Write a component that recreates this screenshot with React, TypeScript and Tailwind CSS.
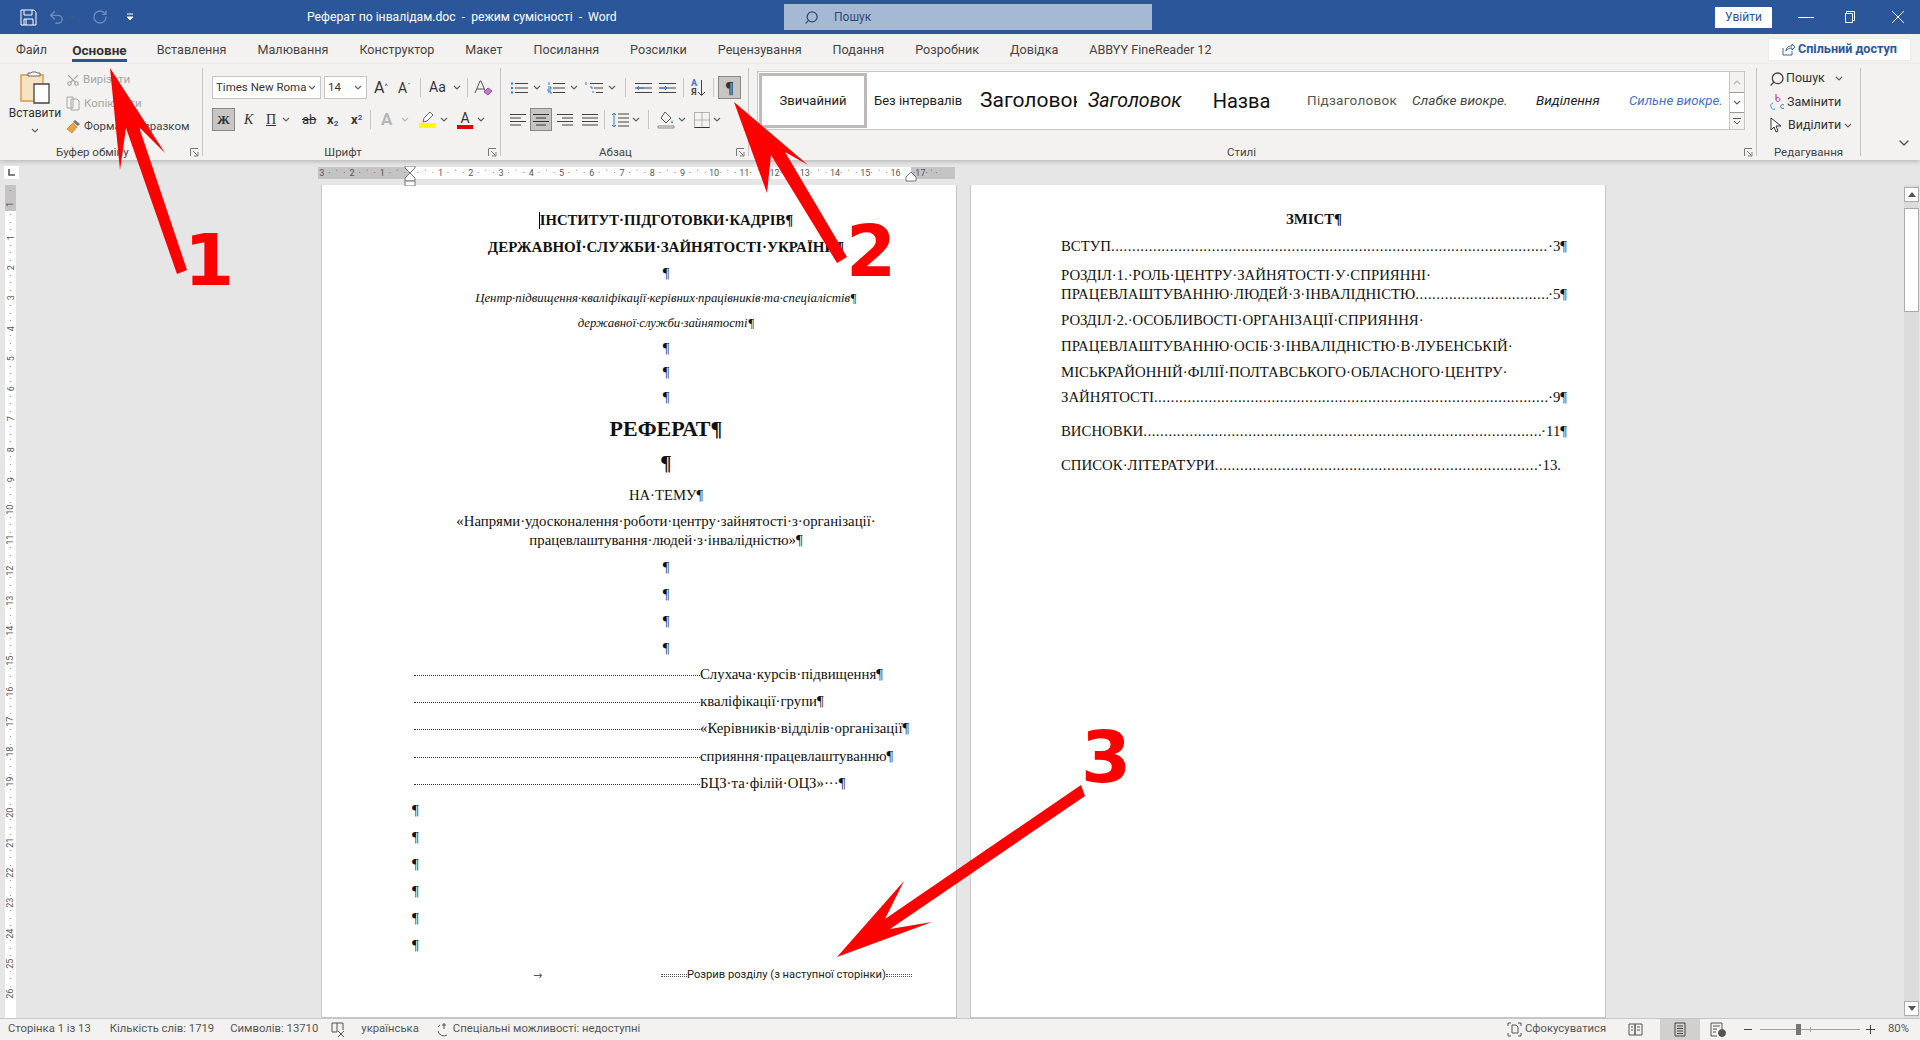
import { ChevronDown, RotateCw, Scissors, Search, Undo2 } from "lucide-react"
import type { ReactNode } from "react"

const tabs = ["Вставлення", "Малювання", "Конструктор", "Макет", "Посилання", "Розсилки", "Рецензування", "Подання", "Розробник", "Довідка", "ABBYY FineReader 12"]

function Chev({ className = "" }: { className?: string }) {
    return <svg width="8" height="5" viewBox="0 0 8 5" className={className}><path d="M1 1l3 3 3-3" fill="none" stroke="#605e5c" strokeWidth="1.1" /></svg>
}

function Launcher() {
    return <svg width="9" height="9" viewBox="0 0 9 9" className="shrink-0"><path d="M.5 8V.5H8M3 3l4.5 4.5M4 8h4V4" fill="none" stroke="#7a7a7a" /></svg>
}

function Sep({ className = "" }: { className?: string }) {
    return <div className={`w-px bg-[#c8c6c4] shrink-0 ${className}`} />
}

function GroupLabel({ children, pad }: { children: ReactNode, pad: string }) {
    return <div className={`h-[16px] pt-[2px] flex items-center text-[11.5px] text-[#444] ${pad}`}>{children}</div>
}

function Lines({ x = 3, n = 3, w = 14, gap = 4, color = "#444" }: { x?: number, n?: number, w?: number, gap?: number, color?: string }) {
    const rows = Array.from({ length: n }, (_, i) => i)
    return <>{rows.map(i => <path key={i} d={`M${x} ${2.5 + i * gap}h${w}`} stroke={color} />)}</>
}

function RulerCell({ label, first }: { label: string, first: boolean }) {
    const num = <span className="w-[7.56px] text-center">{label}</span>
    return <div className="flex w-[30.25px] shrink-0 items-center">
        {first && num}
        <span className="w-[7.56px] text-center">·</span>
        <span className="w-[7.56px] text-center">ˈ</span>
        <span className="w-[7.56px] text-center">·</span>
        {!first && num}
    </div>
}

function Line({ className, children }: { className: string, children: ReactNode }) {
    return <div className={`flex items-center whitespace-nowrap ${className}`}>{children}</div>
}

function Tabbed({ children, className = "" }: { children: ReactNode, className?: string }) {
    return <div className={`flex items-center h-[27px] text-[14.8px] whitespace-nowrap ${className}`}>
        <div className="w-[286px] border-b border-dotted border-[#333] mt-[1px]" />
        <span>{children}</span>
    </div>
}

function TocRow({ title, end, className }: { title: string, end: string, className: string }) {
    return <div className={`flex items-center whitespace-nowrap ${className}`}>
        <span>{title}</span>
        <span className="flex-1 overflow-hidden tracking-[0.5px]">{".".repeat(120)}</span>
        <span>{end}</span>
    </div>
}

function Arrows() {
    return <svg width="1920" height="1040" viewBox="0 0 1920 1040" className="absolute inset-0 pointer-events-none z-20">
        <polygon fill="#ff0000" points="110,68 165,153 139,127 187,270 177,274 126,128 120,170" />
        <polygon fill="#ff0000" points="734,102 808,165 785,152 847,257 837,263 771,155 767,193" />
        <polygon fill="#ff0000" points="837,957 904,881 885,919 1081,785 1085,796 890,929 932,922" />
    </svg>
}

export default function App() {
    return <div className="relative w-[1920px] h-[1040px] overflow-hidden flex flex-col bg-[#e6e6e6] font-['Roboto',sans-serif] text-[#333]">
        {/* title bar */}
        <div className="h-[34px] shrink-0 bg-[#2b579a] flex items-center text-white">
            <div className="w-[307px] flex items-center pl-[20px] shrink-0">
                <svg width="17" height="17" viewBox="0 0 17 17" fill="none" stroke="#fff"><path d="M1 1h13l2 2v13H1zM4 1v5h8V1M4 16v-6h9v6M6 10v6" /></svg>
                <Undo2 size={17} className="ml-[11px] text-[#6c8bbb]" />
                <Chev className="ml-[2px] opacity-40" />
                <RotateCw size={16} className="ml-[17px] text-[#6c8bbb]" />
                <svg width="8" height="8" viewBox="0 0 8 8" className="ml-[18px]"><path d="M1 1h6M1 4h6L4 7z" stroke="#fff" fill="#fff" /></svg>
            </div>
            <div className="w-[477px] shrink-0 text-[12.2px] whitespace-pre">Реферат по інвалідам.doc  -  режим сумісності  -  Word</div>
            <div className="w-[368px] h-[26px] shrink-0 bg-[#a5b9d4] flex items-center text-[#2f4a75] text-[12px] pl-[20px]">
                <Search size={15} className="-scale-x-100 mr-[15px]" />
                Пошук
            </div>
            <div className="ml-auto w-[57px] h-[21px] mr-[25px] bg-white text-[#2b579a] text-[12px] flex items-center justify-center">Увійти</div>
            <div className="w-[16px] h-px bg-white mr-[30px] ml-[1px]" />
            <svg width="12" height="12" viewBox="0 0 12 12" fill="none" stroke="#fff" className="mr-[35px]"><path d="M2.5 2.5V.5h8v9h-2M1.5 2.5h7v9h-7z" /></svg>
            <svg width="14" height="14" viewBox="0 0 14 14" stroke="#fff" className="mr-[15px]"><path d="M1 1l12 12M13 1L1 13" /></svg>
        </div>

        {/* tabs */}
        <div className="h-[30px] shrink-0 bg-[#f3f2f1] flex items-center pl-[16px] text-[12.6px] text-[#444] gap-[31px]">
            <span className="mt-[2px] -mr-[6px]">Файл</span>
            <span className="mt-[2px] -mr-[1px] relative font-bold text-[13.6px] text-[#333]">Основне
                <span className="absolute left-0 right-0 top-[19px] h-[3px] bg-[#2b579a]" />
            </span>
            {tabs.map(t => <span key={t} className="mt-[2px]">{t}</span>)}
            <div className="ml-auto mr-[9px] w-[143px] h-[23px] mt-[1px] bg-white border border-[#edebe9] flex items-center justify-center font-bold text-[#2b579a] gap-[3px]">
                <svg width="13" height="13" viewBox="0 0 13 13" fill="none" stroke="#2b579a"><path d="M1 5v7h9V8M4 8c0-3 2-5 6-5V1l3 3-3 3V5C7 5 5 6 4 8z" strokeWidth=".9" /></svg>
                Спільний доступ
            </div>
        </div>

        {/* ribbon */}
        <div className="h-[96px] shrink-0 bg-[#f3f2f1] flex shadow-[0_2px_4px_rgba(0,0,0,0.18)] z-10 relative text-[11.5px]">
            <div className="w-[202px] shrink-0 flex flex-col">
                <div className="flex-1 flex">
                    <div className="w-[64px] flex flex-col items-center pt-[7px] pl-[6px]">
                        <svg width="32" height="34" viewBox="0 0 32 34" fill="none">
                            <path d="M6 4h18v11H16v15H2V4z" fill="#f6e3c4" stroke="#d9973c" strokeWidth="1.4" />
                            <path d="M9 5V2h3l1-1h4l1 1h3v3z" fill="#fff" stroke="#666" />
                            <path d="M15 13h15v19H15z" fill="#fff" stroke="#444" strokeWidth="1.3" />
                        </svg>
                        <span className="text-[12px] leading-[15px] mt-[1px]">Вставити</span>
                        <Chev className="mt-[7px]" />
                    </div>
                    <div className="flex flex-col pt-[4px] text-[#a6a6a6] pl-[2px]">
                        <div className="h-[24px] flex items-center gap-[3px]"><Scissors size={14} className="-rotate-90" />Вирізати</div>
                        <div className="h-[23px] flex items-center gap-[3px]">
                            <svg width="15" height="15" viewBox="0 0 15 15" fill="none" stroke="#a6a6a6"><path d="M1 1h6v11H1zM5 3h6l2 2v9H5z" fill="#f3f2f1" /></svg>
                            Копіювати
                        </div>
                        <div className="h-[23px] flex items-center gap-[3px] text-[#444]">
                            <svg width="15" height="15" viewBox="0 0 15 15"><path d="M9 1l5 4-2 2-5-4z" fill="#777" /><path d="M7 4l4 4-5 6-5-4z" fill="#e8a33d" stroke="#b5742a" strokeWidth=".6" /></svg>
                            Формат за зразком
                        </div>
                    </div>
                </div>
                <div className="flex items-center pl-[56px] pr-[3px]">
                    <GroupLabel pad="flex-1 pb-0">Буфер обміну</GroupLabel>
                    <Launcher />
                </div>
            </div>
            <Sep className="h-[88px] mt-[4px]" />

            <div className="w-[297px] shrink-0 flex flex-col">
                <div className="flex-1 pl-[9px] pt-[12px]">
                    <div className="flex items-center h-[23px]">
                        <div className="w-[109px] h-[23px] bg-white border border-[#c8c6c4] flex items-center justify-between pl-[3px] pr-[4px] overflow-hidden whitespace-nowrap">
                            <span className="w-[92px] overflow-hidden">Times New Roma</span><Chev />
                        </div>
                        <div className="ml-[3px] w-[43px] h-[23px] bg-white border border-[#c8c6c4] flex items-center justify-between pl-[3px] pr-[4px]">14<Chev /></div>
                        <span className="ml-[7px] text-[16px] leading-none w-[24px]">A<sup className="text-[8px] text-[#2b579a]">^</sup></span>
                        <span className="text-[14px] leading-none w-[22px]">A<sup className="text-[8px] text-[#2b579a]">ˇ</sup></span>
                        <Sep className="h-[19px] mr-[8px]" />
                        <span className="text-[14px] w-[24px]">Aa</span><Chev />
                        <Sep className="h-[19px] mx-[6px]" />
                        <svg width="20" height="18" viewBox="0 0 20 18" fill="none"><path d="M1 14L6 2h1l5 12M3 10h7" stroke="#555" /><path d="M10 13l4-4 4 3-4 4z" fill="#c77bd0" stroke="#a0489e" /></svg>
                    </div>
                    <div className="flex items-center h-[23px] mt-[9px]">
                        <div className="w-[23px] h-[23px] bg-[#c8c6c4] border border-[#8a8886] flex items-center justify-center font-bold text-[13px] font-['Liberation_Serif',serif]">Ж</div>
                        <span className="ml-[9px] w-[22px] italic text-[14px] font-['Liberation_Serif',serif]">К</span>
                        <span className="w-[16px] underline text-[14px] font-['Liberation_Serif',serif]">П</span>
                        <Chev />
                        <span className="ml-[12px] w-[25px] line-through text-[13px]">ab</span>
                        <span className="w-[24px] font-bold text-[13px]">x<sub className="text-[8px] text-[#2b579a]">2</sub></span>
                        <span className="w-[19px] font-bold text-[13px]">x<sup className="text-[8px] text-[#2b579a]">2</sup></span>
                        <Sep className="h-[19px] mr-[10px]" />
                        <span className="w-[20px] text-[17px] font-bold text-[#b5b5b5]">A</span><Chev className="opacity-40" />
                        <div className="ml-[10px] w-[17px] flex flex-col items-center">
                            <svg width="14" height="12" viewBox="0 0 14 12"><path d="M2 11l1-4 6-6 3 3-6 6z" fill="#fff" stroke="#666" /></svg>
                            <div className="w-[17px] h-[5px] bg-[#ffff00]" />
                        </div>
                        <Chev className="ml-[4px]" />
                        <div className="ml-[9px] w-[16px] flex flex-col items-center leading-[14px]">
                            <span className="text-[14px]">A</span>
                            <div className="w-[16px] h-[4px] bg-[#e00000]" />
                        </div>
                        <Chev className="ml-[4px]" />
                    </div>
                </div>
                <div className="flex items-center pr-[3px]">
                    <GroupLabel pad="flex-1 justify-center pr-[5px]">Шрифт</GroupLabel>
                    <Launcher />
                </div>
            </div>
            <Sep className="h-[88px] mt-[4px]" />

            <div className="w-[247px] shrink-0 flex flex-col">
                <div className="flex-1 pl-[9px] pt-[12px]">
                    <div className="flex items-center h-[23px]">
                        <svg width="18" height="14" viewBox="0 0 18 14" fill="none"><Lines x={5} w={13} gap={4.5} /><path d="M1 2.5h2M1 7h2M1 11.5h2" stroke="#2b7cd3" strokeWidth="2" /></svg>
                        <Chev className="ml-[5px]" />
                        <svg width="18" height="14" viewBox="0 0 18 14" fill="none" className="ml-[6px]"><Lines x={6} w={12} gap={4.5} /><path d="M2 1v3M1 6h3v2H1v2h3M1 11h3v2" stroke="#2b7cd3" /></svg>
                        <Chev className="ml-[5px]" />
                        <svg width="20" height="14" viewBox="0 0 20 14" fill="none" className="ml-[6px]"><path d="M6 2.5h13M10 7h9M12 11.5h7" stroke="#444" /><path d="M2 1v3M6 6h2v2M8 11h2" stroke="#2b7cd3" /></svg>
                        <Chev className="ml-[4px]" />
                        <Sep className="h-[19px] mx-[9px]" />
                        <svg width="17" height="14" viewBox="0 0 17 14" fill="none"><Lines x={0} w={17} gap={4.5} /><path d="M9 7H2m2-2L2 7l2 2" stroke="#2b7cd3" /></svg>
                        <svg width="17" height="14" viewBox="0 0 17 14" fill="none" className="ml-[7px]"><Lines x={0} w={17} gap={4.5} /><path d="M1 7h7M6 5l2 2-2 2" stroke="#2b7cd3" /></svg>
                        <Sep className="h-[19px] mx-[7px]" />
                        <div className="w-[18px] flex items-center leading-[9px] text-[9px]">
                            <div className="flex flex-col items-center font-bold text-[#2b7cd3]"><span>А</span><span className="text-[#444]">Я</span></div>
                            <svg width="9" height="18" viewBox="0 0 9 18" fill="none" stroke="#444"><path d="M4.5 1v15M1 13l3.5 3.5L8 13" /></svg>
                        </div>
                        <Sep className="h-[19px] mx-[4px]" />
                        <div className="w-[23px] h-[23px] bg-[#c8c6c4] border border-[#8a8886] flex items-center justify-center font-bold text-[16px] font-['Liberation_Serif',serif]">¶</div>
                    </div>
                    <div className="flex items-center h-[23px] mt-[9px]">
                        <svg width="17" height="14" viewBox="0 0 17 14" fill="none"><path d="M0 1.5h16M0 5h11M0 8.5h16M0 12h11" stroke="#444" /></svg>
                        <div className="ml-[3px] w-[22px] h-[23px] bg-[#c8c6c4] border border-[#8a8886] flex items-center justify-center">
                            <svg width="16" height="14" viewBox="0 0 16 14" fill="none"><path d="M0 1.5h16M3 5h10M0 8.5h16M3 12h10" stroke="#333" /></svg>
                        </div>
                        <svg width="17" height="14" viewBox="0 0 17 14" fill="none" className="ml-[5px]"><path d="M0 1.5h16M5 5h11M0 8.5h16M5 12h11" stroke="#444" /></svg>
                        <svg width="16" height="14" viewBox="0 0 16 14" fill="none" className="ml-[8px]"><path d="M0 1.5h16M0 5h16M0 8.5h16M0 12h16" stroke="#444" /></svg>
                        <Sep className="h-[19px] mx-[6px]" />
                        <svg width="18" height="16" viewBox="0 0 18 16" fill="none"><path d="M7 2h11M7 6h11M7 10h11M7 14h11" stroke="#444" /><path d="M3 1v14M1 3l2-2 2 2M1 13l2 2 2-2" stroke="#2b7cd3" /></svg>
                        <Chev className="ml-[3px]" />
                        <Sep className="h-[19px] mx-[8px]" />
                        <svg width="18" height="18" viewBox="0 0 18 18" fill="none"><path d="M8 1l6 6-5 5-5-5z" stroke="#555" /><path d="M15 9l1 3h-2z" fill="#2b7cd3" /><path d="M1 15h16v2H1z" fill="#f3f2f1" stroke="#888" /></svg>
                        <Chev className="ml-[3px]" />
                        <svg width="16" height="16" viewBox="0 0 16 16" fill="none" className="ml-[8px]"><path d="M.5.5h15v15H.5zM8 .5v15M.5 8h15" stroke="#777" strokeDasharray="1 1" /><path d="M.5 15.5h15" stroke="#333" /></svg>
                        <Chev className="ml-[3px]" />
                    </div>
                </div>
                <div className="flex items-center pr-[3px]">
                    <GroupLabel pad="flex-1 justify-center pr-[6px]">Абзац</GroupLabel>
                    <Launcher />
                </div>
            </div>
            <Sep className="h-[88px] mt-[4px]" />

            <div className="w-[1007px] shrink-0 flex flex-col">
                <div className="flex-1 pt-[7px] pl-[8px]">
                    <div className="flex h-[59px] w-[988px]">
                        <div className="flex-1 bg-white border border-[#c8c6c4] flex items-center overflow-hidden whitespace-nowrap">
                            <div className="w-[108px] h-[55px] shrink-0 ml-[1px] border-[3px] border-[#bdbbb9] flex items-center justify-center text-[#222] text-[13px]">Звичайний</div>
                            <div className="w-[107px] shrink-0 overflow-hidden pl-[7px] text-[13px] text-[#222]">Без інтервалів</div>
                            <div className="w-[107px] shrink-0 pl-[6px] text-[21px] text-[#111]"><div className="w-[97px] overflow-hidden">Заголовок</div></div>
                            <div className="w-[107px] shrink-0 overflow-hidden pl-[7px] text-[19.5px] italic text-[#111]">Заголовок</div>
                            <div className="w-[107px] shrink-0 overflow-hidden text-center text-[20px] text-[#111]">Назва</div>
                            <div className="w-[107px] shrink-0 overflow-hidden pl-[12px] text-[13.5px] text-[#555] tracking-[0.3px]">Підзаголовок</div>
                            <div className="w-[107px] shrink-0 overflow-hidden pl-[10px] text-[13.6px] italic text-[#444]">Слабке виокре.</div>
                            <div className="w-[107px] shrink-0 overflow-hidden pl-[27px] text-[13.5px] italic text-[#222]">Виділення</div>
                            <div className="w-[107px] shrink-0 overflow-hidden pl-[13px] text-[13.2px] italic text-[#4472c4]">Сильне виокре.</div>
                        </div>
                        <div className="w-[15px] flex flex-col border-y border-r border-[#c8c6c4] bg-[#f3f2f1]">
                            <div className="h-[20px] flex items-center justify-center"><Chev className="rotate-180 opacity-40" /></div>
                            <div className="h-[21px] bg-white border-y border-[#9a9a9a] flex items-center justify-center"><Chev /></div>
                            <div className="flex-1 flex items-center justify-center"><svg width="8" height="7" viewBox="0 0 8 7" fill="none" stroke="#555"><path d="M0 .5h8M1 3l3 3 3-3" /></svg></div>
                        </div>
                    </div>
                </div>
                <div className="flex items-center pr-[3px]">
                    <GroupLabel pad="flex-1 justify-center pr-[10px]">Стилі</GroupLabel>
                    <Launcher />
                </div>
            </div>
            <Sep className="h-[88px] mt-[4px]" />

            <div className="w-[103px] shrink-0 flex flex-col">
                <div className="flex-1 pl-[12px] pt-[3px] text-[12.5px]">
                    <div className="h-[23px] flex items-center">
                        <Search size={16} className="-scale-x-100 text-[#444] mr-[1px]" />Пошук
                        <Chev className="ml-[10px]" />
                    </div>
                    <div className="h-[24px] flex items-center">
                        <svg width="16" height="18" viewBox="0 0 16 18" fill="none" className="mr-[2px]"><path d="M7 1v6a2 2 0 1 0 0-1" stroke="#a0328f" /><path d="M4 10a3 3 0 1 0 2 6" stroke="#2b9cd3" /><path d="M15 12a2 2 0 1 0 0 3" stroke="#2b7cd3" /></svg>
                        Замінити
                    </div>
                    <div className="h-[23px] flex items-center">
                        <svg width="15" height="17" viewBox="0 0 15 17" fill="none" className="mr-[4px]"><path d="M2 1v12l3-3 2 5 2-1-2-5h5z" stroke="#333" fill="#fff" /></svg>
                        Виділити<Chev className="ml-[3px]" />
                    </div>
                </div>
                <GroupLabel pad="justify-center">Редагування</GroupLabel>
            </div>
            <Sep className="h-[88px] mt-[4px]" />
            <div className="flex-1 flex items-end justify-end pr-[8px] pb-[9px]"><ChevronDown size={16} className="text-[#555]" /></div>
        </div>

        {/* workspace */}
        <div className="flex-1 min-h-0 flex flex-col overflow-hidden">
            <div className="h-[25px] shrink-0 flex pt-[6px]">
                <div className="ml-[4px] w-[15px] h-[13px] bg-white flex items-center justify-center">
                    <svg width="7" height="7" viewBox="0 0 7 7" fill="none" stroke="#555" strokeWidth="1.6"><path d="M1 0v6h6" /></svg>
                </div>
                <div className="ml-[299px] h-[12px] mt-[1px] flex text-[9px] leading-none text-[#555] relative">
                    <div className="w-[92px] bg-[#c4c4c4] flex items-center overflow-hidden">
                        {["3", "2", "1"].map(n => <RulerCell key={n} label={n} first />)}
                    </div>
                    <div className="w-[501px] bg-white flex items-center overflow-hidden pl-[4px]">
                        {Array.from({ length: 16 }, (_, i) => <RulerCell key={i} label={String(i + 1)} first={false} />)}
                    </div>
                    <div className="w-[44px] bg-[#c4c4c4] flex items-center pl-[2px]">·17· ˈ ·</div>
                    <svg width="12" height="20" viewBox="0 0 12 20" className="absolute left-[86px] -top-[1px]"><path d="M1 0h10v2L6 7 1 2zM6 7l5 5v3H1v-3z" fill="#fff" stroke="#777" /><path d="M1 15h10v5H1z" fill="#fff" stroke="#777" /></svg>
                    <svg width="12" height="12" viewBox="0 0 12 12" className="absolute left-[587px] top-[4px]"><path d="M6 1l5 5v4H1V6z" fill="#fff" stroke="#777" /></svg>
                </div>
            </div>
            <div className="flex-1 min-h-0 flex">
                <div className="ml-[5px] w-[11px] shrink-0 flex flex-col text-[9px] leading-none text-[#555] overflow-hidden">
                    <div className="h-[26px] shrink-0 bg-[#c4c4c4] flex flex-col items-center justify-around"><span>·</span><span className="-rotate-90">1</span></div>
                    <div className="flex-1 bg-white flex flex-col items-center">
                        {Array.from({ length: 26 }, (_, i) => <div key={i} className="h-[30.25px] shrink-0 flex flex-col items-center justify-end">
                            <span className="h-[7.5px]">·</span>
                            <span className="h-[7.5px]">·</span>
                            <span className="h-[7.5px]">·</span>
                            <span className="h-[7.5px] -rotate-90 whitespace-nowrap">{i + 1}</span>
                        </div>)}
                    </div>
                </div>

                {/* page 1 */}
                <div className="ml-[305px] w-[636px] shrink-0 bg-white border-x border-b border-[#c6c6c6] pt-[22px] pl-[92px] pr-[40px] font-['Liberation_Serif',serif] text-[#111] overflow-hidden">
                    <div className="flex flex-col w-[504px] items-center text-[14.7px]">
                        <Line className="h-[27px] font-bold"><span className="w-px h-[17px] bg-black" />ІНСТИТУТ·ПІДГОТОВКИ·КАДРІВ¶</Line>
                        <Line className="h-[27px] font-bold text-[15px]">ДЕРЖАВНОЇ·СЛУЖБИ·ЗАЙНЯТОСТІ·УКРАЇНИ¶</Line>
                        <Line className="h-[25px]">¶</Line>
                        <Line className="h-[25px] italic text-[12.8px]">Центр·підвищення·кваліфікації·керівних·працівників·та·спеціалістів¶</Line>
                        <Line className="h-[25px] italic text-[12.8px]">державної·служби·зайнятості¶</Line>
                        <Line className="h-[24px]">¶</Line>
                        <Line className="h-[25px]">¶</Line>
                        <Line className="h-[25px]">¶</Line>
                        <Line className="h-[36px] font-bold text-[22px]">РЕФЕРАТ¶</Line>
                        <Line className="h-[34px] mt-[1px] font-bold text-[21px]">¶</Line>
                        <Line className="h-[28px]">НА·ТЕМУ¶</Line>
                        <Line className="h-[23px] mt-[1px] text-[14.8px]">«Напрями·удосконалення·роботи·центру·зайнятості·з·організації·</Line>
                        <Line className="h-[22px] -mt-[4px] text-[14.8px]">працевлаштування·людей·з·інвалідністю»¶</Line>
                        <Line className="h-[28px] mt-[2px]">¶</Line>
                        <Line className="h-[27px]">¶</Line>
                        <Line className="h-[27px]">¶</Line>
                        <Line className="h-[26px]">¶</Line>
                    </div>
                    <Tabbed>Слухача·курсів·підвищення¶</Tabbed>
                    <Tabbed>кваліфікації·групи¶</Tabbed>
                    <Tabbed>«Керівників·відділів·організації¶</Tabbed>
                    <Tabbed className="mt-[1px]">сприяння·працевлаштуванню¶</Tabbed>
                    <Tabbed>БЦЗ·та·філій·ОЦЗ»···¶</Tabbed>
                    {[0, 1, 2, 3, 4, 5].map(i => <Line key={i} className="h-[27px] text-[15px] -ml-[2px]">¶</Line>)}
                    <div className="h-[28px] mt-[2px] flex items-center">
                        <span className="ml-[119px] w-[128px] text-[11px] text-[#555] font-['DejaVu_Sans',sans-serif] leading-none">→</span>
                        <div className="w-[26px] h-[3px] border-y border-dotted border-[#555]" />
                        <span className="text-[11.2px] font-['Roboto',sans-serif] text-[#222] whitespace-nowrap">Розрив розділу (з наступної сторінки)</span>
                        <div className="w-[26px] h-[3px] border-y border-dotted border-[#555]" />
                    </div>
                </div>

                {/* page 2 */}
                <div className="ml-[13px] w-[636px] shrink-0 bg-white border-x border-b border-[#c6c6c6] pt-[21px] pl-[90px] pr-[38px] font-['Liberation_Serif',serif] text-[14.8px] text-[#111] overflow-hidden">
                    <div className="h-[27px] flex items-center justify-center font-bold">ЗМІСТ¶</div>
                    <TocRow className="h-[27px]" title="ВСТУП" end="·3¶" />
                    <div className="h-[22px] mt-[4px] flex items-center whitespace-nowrap">РОЗДІЛ·1.·РОЛЬ·ЦЕНТРУ·ЗАЙНЯТОСТІ·У·СПРИЯННІ·</div>
                    <TocRow className="h-[16px]" title="ПРАЦЕВЛАШТУВАННЮ·ЛЮДЕЙ·З·ІНВАЛІДНІСТЮ" end="·5¶" />
                    <div className="h-[26px] mt-[5px] flex items-center whitespace-nowrap">РОЗДІЛ·2.·ОСОБЛИВОСТІ·ОРГАНІЗАЦІЇ·СПРИЯННЯ·</div>
                    <div className="h-[26px] flex items-center whitespace-nowrap">ПРАЦЕВЛАШТУВАННЮ·ОСІБ·З·ІНВАЛІДНІСТЮ·В·ЛУБЕНСЬКІЙ·</div>
                    <div className="h-[26px] flex items-center whitespace-nowrap">МІСЬКРАЙОННІЙ·ФІЛІЇ·ПОЛТАВСЬКОГО·ОБЛАСНОГО·ЦЕНТРУ·</div>
                    <TocRow className="h-[24px]" title="ЗАЙНЯТОСТІ" end="·9¶" />
                    <TocRow className="h-[34px] mt-[5px]" title="ВИСНОВКИ" end="·11¶" />
                    <TocRow className="h-[34px] pr-[6px]" title="СПИСОК·ЛІТЕРАТУРИ" end="·13." />
                </div>

                {/* scrollbar */}
                <div className="ml-auto mr-[1px] w-[15px] shrink-0 flex flex-col bg-[#dcdcdc]">
                    <div className="h-[15px] mt-[2px] bg-white border border-[#ababab] flex items-center justify-center">
                        <svg width="8" height="5" viewBox="0 0 8 5"><path d="M4 0l4 5H0z" fill="#555" /></svg>
                    </div>
                    <div className="h-[104px] mt-[6px] bg-white border border-[#ababab]" />
                    <div className="flex-1" />
                    <div className="h-[15px] mb-[2px] bg-white border border-[#ababab] flex items-center justify-center">
                        <svg width="8" height="5" viewBox="0 0 8 5"><path d="M4 5l4-5H0z" fill="#555" /></svg>
                    </div>
                </div>
            </div>
        </div>

        {/* status bar */}
        <div className="h-[22px] shrink-0 bg-[#f3f2f1] border-t border-[#c8c6c4] flex items-center pl-[8px] text-[11.3px] text-[#555] relative z-10">
            <span>Сторінка 1 із 13</span>
            <span className="ml-[19px]">Кількість слів: 1719</span>
            <span className="ml-[16px]">Символів: 13710</span>
            <svg width="14" height="15" viewBox="0 0 14 15" fill="none" stroke="#555" className="ml-[13px]"><path d="M1 1h5v9H1zM6 1h6v7M7 9l6 6M13 9l-6 6" /></svg>
            <span className="ml-[16px]">українська</span>
            <svg width="14" height="15" viewBox="0 0 14 15" fill="none" stroke="#555" className="ml-[18px]"><path d="M7 1v6M5 3h4M1 9a6 6 0 0 0 9 4M1 5a6 6 0 0 1 2-2" /></svg>
            <span className="ml-[2px]">Спеціальні можливості: недоступні</span>

            <div className="ml-auto flex items-center h-full">
                <svg width="15" height="15" viewBox="0 0 15 15" fill="none" stroke="#555"><path d="M5 3h4l2 2v6H5zM1 4V1h3M14 4V1h-3M1 11v3h3M14 11v3h-3" /></svg>
                <span className="ml-[3px] w-[78px]">Сфокусуватися</span>
                <svg width="15" height="13" viewBox="0 0 15 13" fill="none" stroke="#555" className="ml-[25px]"><path d="M1 1h6v11H1zM7 1h7v11H7zM3 4h2M3 7h2M9 4h3M9 7h3" /></svg>
                <div className="ml-[17px] w-[40px] h-full bg-[#d2d0ce] flex items-center justify-center">
                    <svg width="12" height="15" viewBox="0 0 12 15" fill="none" stroke="#444"><path d="M1 1h10v13H1zM3 4h6M3 6.5h6M3 9h6M3 11.5h6" /></svg>
                </div>
                <svg width="16" height="15" viewBox="0 0 16 15" fill="none" stroke="#555" className="ml-[10px]"><path d="M1 1h11v6M1 1v13h6M3 4h7M3 7h4M3 10h3" /><circle cx="12" cy="11" r="3.5" fill="#555" /></svg>
                <div className="ml-[18px] w-[8px] h-px bg-[#444]" />
                <div className="ml-[8px] w-[100px] h-px bg-[#a0a0a0] relative">
                    <div className="absolute left-[36px] -top-[5px] w-[5px] h-[11px] bg-[#777]" />
                    <div className="absolute left-[50px] -top-[2px] w-px h-[5px] bg-[#a0a0a0]" />
                </div>
                <svg width="9" height="9" viewBox="0 0 9 9" stroke="#444" className="ml-[6px]"><path d="M0 4.5h9M4.5 0v9" /></svg>
                <span className="ml-[13px] mr-[8px] w-[24px]">80%</span>
            </div>
        </div>

        <Arrows />
        <span className="absolute z-20 left-[184px] top-[216px] text-[72px] leading-[88px] font-bold text-[#ff0000] font-['DejaVu_Sans',sans-serif]">1</span>
        <span className="absolute z-20 left-[846px] top-[207px] text-[72px] leading-[88px] font-bold text-[#ff0000] font-['DejaVu_Sans',sans-serif]">2</span>
        <span className="absolute z-20 left-[1081px] top-[713px] text-[72px] leading-[88px] font-bold text-[#ff0000] font-['DejaVu_Sans',sans-serif]">3</span>
    </div>
}
